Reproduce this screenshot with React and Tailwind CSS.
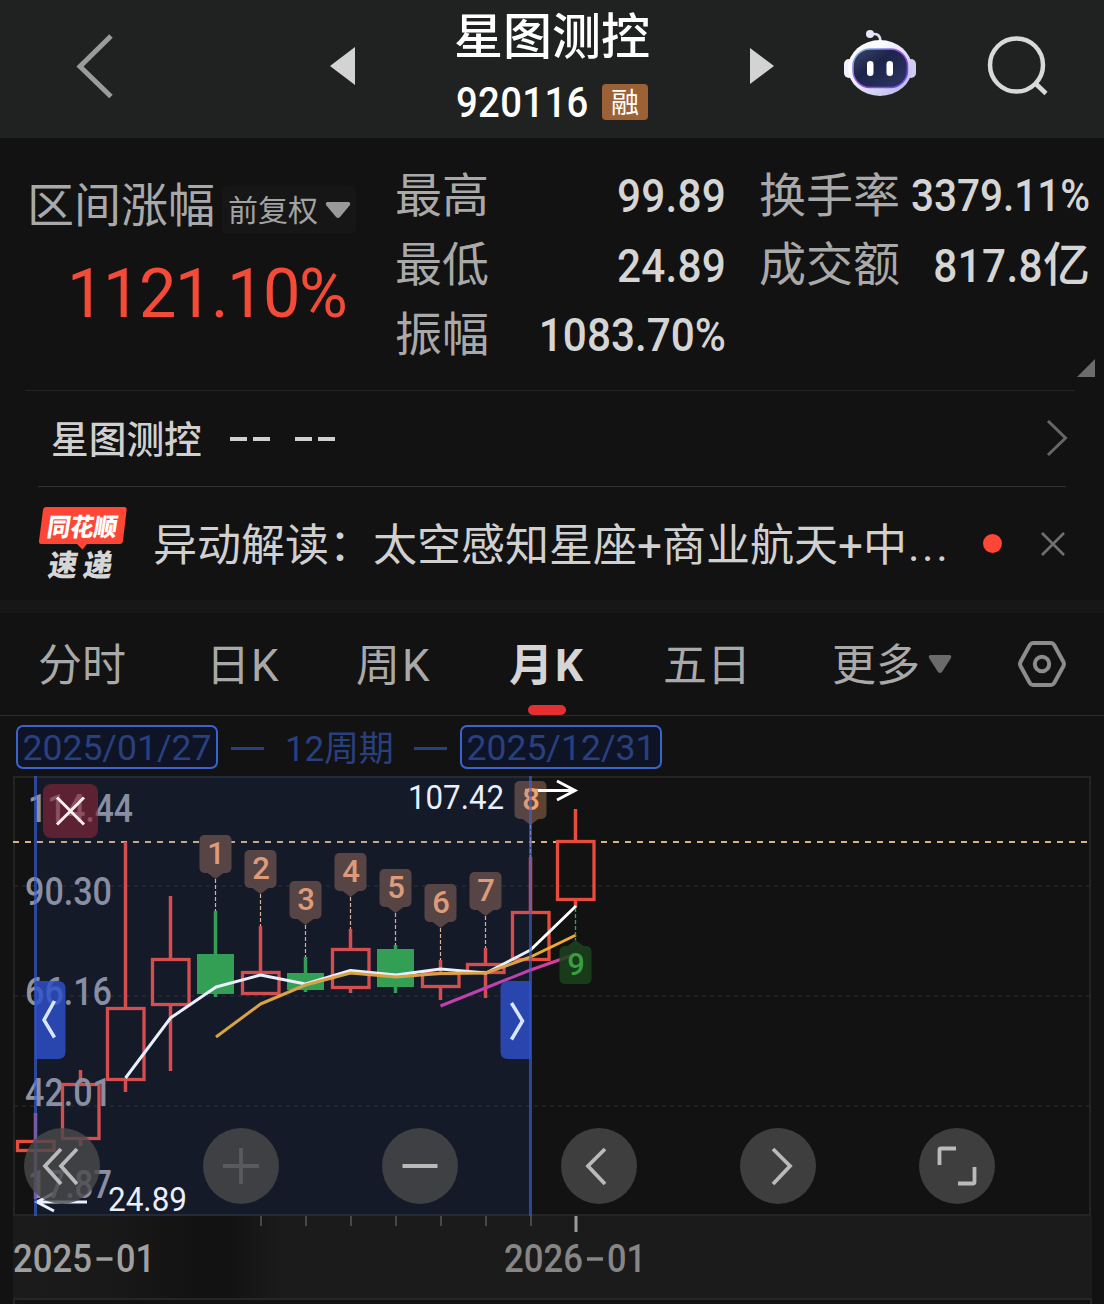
const TABS = [
  { label: '分时', box: 'ml-[38px] w-[88px]' },
  { label: '日K', box: 'ml-[80px] w-[74px] tracking-[1px]' },
  { label: '周K', box: 'ml-[76px] w-[76px] tracking-[2px]' },
  { label: '月K', box: 'ml-[77px] w-[78px] tracking-[2px]', active: true },
  { label: '五日', box: 'ml-[76px] w-[88px]' },
  { label: '更多', box: 'ml-[81px] w-[88px]' },
]

// x: centre, top/bottom: body, high/low: wick
const CANDLES = [
  { x: 35.5, top: 1140, bottom: 1152, high: 1113, low: 1199 },
  { x: 80.5, top: 1083, bottom: 1140, high: 1070, low: 1146 },
  { x: 125.5, top: 1007, bottom: 1081, high: 842, low: 1092 },
  { x: 170.5, top: 958, bottom: 1006, high: 896, low: 1071 },
  { x: 215.5, top: 954, bottom: 994, high: 911, low: 997, down: true },
  { x: 260.5, top: 971, bottom: 995, high: 926, low: 995 },
  { x: 305.5, top: 973, bottom: 990, high: 957, low: 992, down: true },
  { x: 350.5, top: 948, bottom: 989, high: 929, low: 993 },
  { x: 395.5, top: 949, bottom: 987, high: 945, low: 993, down: true },
  { x: 440.5, top: 972, bottom: 988, high: 960, low: 1000 },
  { x: 485.5, top: 963, bottom: 974, high: 948, low: 998 },
  { x: 530.5, top: 911, bottom: 961, high: 857, low: 961 },
  { x: 575.5, top: 840, bottom: 901, high: 809, low: 907 },
]

const BADGES = [
  { n: 1, x: 215.5, y: 835, to: 911 },
  { n: 2, x: 260.5, y: 850, to: 926 },
  { n: 3, x: 305.5, y: 881, to: 957 },
  { n: 4, x: 350.5, y: 853, to: 929 },
  { n: 5, x: 395.5, y: 869, to: 945 },
  { n: 6, x: 440.5, y: 884, to: 960 },
  { n: 7, x: 485.5, y: 872, to: 948 },
  { n: 8, x: 530.5, y: 781, to: 857 },
]

const PRICES = [
  { text: '114.44', x: 28, y: 822, w: 105 },
  { text: '90.30', x: 25, y: 905, w: 87 },
  { text: '66.16', x: 25, y: 1005, w: 87 },
  { text: '42.01', x: 25, y: 1106, w: 87 },
  { text: '17.87', x: 28, y: 1198, w: 84 },
]

function Header() {
  return (
    <header className="flex h-[138px] bg-[#202221]">
      <svg className="ml-[76px] mt-[33px] h-[66px] w-[38px]" viewBox="76 33 38 66" fill="none">
        <path d="M111 36 80 66.5 111 96.500" stroke="#9b9b9b" strokeWidth="5" />
      </svg>
      <svg className="ml-[216px] mt-[47px] h-[38px] w-[26px]" viewBox="0 0 26 38">
        <path d="M25 0V38L0 19Z" fill="#d3d3d3" />
      </svg>
      <div className="ml-[96px] flex w-[200px] flex-col items-center">
        <h1 className="mt-[5px] h-[66px] whitespace-nowrap text-[49px] font-medium leading-[66px] text-white">星图测控</h1>
        <div className="mt-[8px] flex w-[192px] items-center justify-between">
          <span className="w-[130px] origin-left scale-x-90 text-[42.500px] font-medium leading-[48px] tracking-[0.4px] text-white">920116</span>
          <span className="mb-[2px] flex h-[36px] w-[46px] items-center justify-center rounded-[4px] bg-[#9c6236] pt-[4px] text-[28px] leading-[36px] text-white">融</span>
        </div>
      </div>
      <svg className="ml-[98px] mt-[47px] h-[38px] w-[26px]" viewBox="0 0 26 38">
        <path d="M0 1V37L24 19Z" fill="#d3d3d3" />
      </svg>
      <Robot />
      <svg className="ml-[69px] mt-[34px] h-[64px] w-[64px]" viewBox="986 34 64 64" fill="none" stroke="#d9d9d9" strokeWidth="4.500">
        <circle cx="1016.500" cy="65" r="26.500" />
        <path d="M1035.500 83.500 1046 93.500" />
      </svg>
    </header>
  )
}

function Robot() {
  return (
    <svg className="ml-[67px] mt-[28px] h-[70px] w-[74px]" viewBox="843 28 74 70">
      <defs>
        <linearGradient id="shell" x1="0" y1="0" x2="1" y2="1">
          <stop offset="0.3" stopColor="#fbfbff" />
          <stop offset="1" stopColor="#b3acec" />
        </linearGradient>
        <linearGradient id="rim" x1="0" y1="0" x2="1" y2="1">
          <stop offset="0" stopColor="#6fd0ee" />
          <stop offset="0.5" stopColor="#a044e0" />
          <stop offset="1" stopColor="#5a55e8" />
        </linearGradient>
        <linearGradient id="visor" x1="0" y1="0" x2="1" y2="1">
          <stop offset="0" stopColor="#3e4568" />
          <stop offset="0.4" stopColor="#1c244a" />
          <stop offset="1" stopColor="#303763" />
        </linearGradient>
      </defs>
      <path d="M871 34.500C877 33 880 35 880.500 41" fill="none" stroke="#dfe0f4" strokeWidth="2.600" />
      <circle cx="870" cy="34" r="4" fill="#e6e6f8" />
      <rect x="844" y="59" width="10" height="19" rx="5" fill="#f1f0fe" />
      <rect x="906" y="59" width="10" height="19" rx="5" fill="#cfcbf5" />
      <ellipse cx="880" cy="68" rx="32" ry="28" fill="url(#shell)" />
      <rect x="853" y="49" width="54.500" height="38.500" rx="17" fill="url(#visor)" stroke="url(#rim)" strokeWidth="1.600" />
      <rect x="867" y="61" width="6.500" height="15" rx="3.200" fill="#fff" />
      <rect x="886.500" y="61" width="6.500" height="15" rx="3.200" fill="#fff" />
    </svg>
  )
}

function Stat({ label, value, unit, valueClass }) {
  return (
    <div className="flex h-[69.5px] items-center whitespace-nowrap font-medium text-[#d5d5d5]">
      <span className="text-[47px] font-normal leading-[60px] text-[#a9a9a9]">{label}</span>
      <span className="flex w-0 flex-1 justify-end pt-[1px]">
        <span className={`origin-right scale-x-90 leading-[60px] ${valueClass}`}>{value}</span>
      </span>
      {unit && <span className="text-[47px] leading-[60px]">{unit}</span>}
    </div>
  )
}

function Summary() {
  return (
    <section className="flex h-[252px] pt-[23px]">
      <div className="ml-[27px] w-[330px]">
        <div className="mt-[15px] flex items-center">
          <span className="whitespace-nowrap text-[47px] leading-[60px] text-[#a9a9a9]">区间涨幅</span>
          <span className="ml-[7px] mt-[7px] flex h-[48px] w-[134px] items-center rounded-[6px] bg-[#161616] text-[#a2a2a2]">
            <span className="pl-[6px] pt-[2px] text-[30px] leading-[40px]">前复权</span>
            <svg className="ml-[6px] h-[18px] w-[28px]" viewBox="0 0 28 18">
              <path d="M3 1H25Q27 2 26 4L16 16Q14 18 12 16L2 4Q1 2 3 1Z" fill="#999" />
            </svg>
          </span>
        </div>
        <div className="ml-[40px] mt-[18px] origin-left scale-x-[0.965] whitespace-nowrap text-[69px] leading-[80px] tracking-[-1.5px] text-[#f44a38]">
          1121.10%
        </div>
      </div>
      <div className="ml-[38px] w-[331px]">
        <Stat label="最高" value="99.89" valueClass="text-[47px] tracking-[0.2px]" />
        <Stat label="最低" value="24.89" valueClass="text-[47px] tracking-[0.2px]" />
        <Stat label="振幅" value="1083.70%" valueClass="text-[47px]" />
      </div>
      <div className="ml-[33px] w-[331px]">
        <Stat label="换手率" value="3379.11%" valueClass="text-[45px]" />
        <Stat label="成交额" value="817.8" unit="亿" valueClass="text-[47px] tracking-[0.4px]" />
        <svg className="ml-auto -mr-[5px] mt-[59px] h-[18px] w-[18px]" viewBox="0 0 18 18">
          <path d="M18 0V18H0Z" fill="#6c6c6c" />
        </svg>
      </div>
    </section>
  )
}

function NewsLogo() {
  return (
    <svg className="h-[76px] w-[92px]" viewBox="38 506 92 76">
      <path d="M46 507H124Q127 507 126.600 510L123 541Q122.500 544 119.500 544H87L82.500 549.500 77 544H42Q38.500 544 39 541L43 510Q43.500 507 46 507Z" fill="#fd4635" />
      <g className="font-black" fontSize="25">
        <text transform="translate(46 535.500) skewX(-9)" textLength="70" lengthAdjust="spacingAndGlyphs" fill="#fff">同花顺</text>
        <text transform="translate(47 575.500) skewX(-9)" fontSize="30" textLength="29" lengthAdjust="spacingAndGlyphs" fill="#d6d6d6">速</text>
        <text transform="translate(82 575.500) skewX(-9)" fontSize="30" textLength="29" lengthAdjust="spacingAndGlyphs" fill="#d6d6d6">递</text>
      </g>
    </svg>
  )
}

function News() {
  return (
    <section>
      <div className="ml-[25px] mr-[29px] h-px bg-[#232323]" />
      <div className="flex h-[95px] items-center pl-[51px] pr-[36px] text-[#d0d0d0]">
        <span className="mt-[2px] text-[37.7px] font-medium leading-[50px]">星图测控</span>
        <span className="ml-[28px] flex gap-[6px]">
          <i className="h-[4px] w-[17px] bg-[#d0d0d0]" />
          <i className="h-[4px] w-[17px] bg-[#d0d0d0]" />
        </span>
        <span className="ml-[25px] flex gap-[6px]">
          <i className="h-[4px] w-[17px] bg-[#d0d0d0]" />
          <i className="h-[4px] w-[17px] bg-[#d0d0d0]" />
        </span>
        <svg className="ml-auto h-[38px] w-[22px]" viewBox="0 1 22 38" fill="none">
          <path d="M2 2 19.500 19 2 36" stroke="#666" strokeWidth="3" />
        </svg>
      </div>
      <div className="ml-[38px] mr-[38px] h-px bg-[#313131]" />
      <div className="flex h-[113px] items-center pl-[38px]">
        <NewsLogo />
        <span className="ml-[23px] w-[801px] whitespace-nowrap pt-[4px] text-[44px] leading-[60px] text-[#d0d0d0]">
          异动解读：太空感知星座+商业航天+中<span className="pl-[1px] tracking-[2.5px]">...</span>
        </span>
        <span className="ml-[29px] size-[19px] rounded-full bg-[#fd4635]" />
        <svg className="ml-[38px] size-[26px]" viewBox="0 0 26 26" stroke="#707070" strokeWidth="2.600">
          <path d="M2 2 24 24M24 2 2 24" />
        </svg>
      </div>
      <div className="h-[13px] bg-[#171717]" />
    </section>
  )
}

function Tabs() {
  return (
    <nav className="flex h-[103px] border-b border-[#2c2c2c]">
      {TABS.map(tab => (
        <div key={tab.label} className={`relative flex-none whitespace-nowrap ${tab.box}`}>
          <span
            className={`block pt-[23px] text-[44px] leading-[60px] ${tab.active ? 'font-bold text-[#d5d5d5]' : 'text-[#a9a9a9]'}`}
          >
            {tab.label}
          </span>
          {tab.active && <span className="absolute bottom-0 left-[19px] h-[10px] w-[38px] rounded-full bg-[#e53031]" />}
        </div>
      ))}
      <svg className="ml-[8px] mt-[41px] h-[20px] w-[24px]" viewBox="0 0 24 20">
        <path d="M2 1H22Q24 2 23 4L14 18Q12 20 10 18L1 4Q0 2 2 1Z" fill="#6b6b6b" />
      </svg>
      <svg className="ml-[64px] mt-[26px] h-[50px] w-[52px]" viewBox="0 0 52 50" fill="none" stroke="#8c8c8c" strokeWidth="4">
        <path d="M17 4H35Q37 4 38.200 6L47.500 23Q48.500 25 47.500 27L38.200 44Q37 46 35 46H17Q15 46 13.800 44L4.500 27Q3.500 25 4.500 23L13.800 6Q15 4 17 4Z" />
        <circle cx="26" cy="25" r="7.200" />
      </svg>
    </nav>
  )
}

function RangeBar() {
  return (
    <div className="flex h-[60px] pl-[16px] pt-[9px] text-[35.500px] leading-[43px] text-[#29407f]">
      <span className="flex h-[44px] w-[202px] justify-center whitespace-nowrap rounded-[7px] border-2 border-[#3a63cc] bg-[#0e1426]">
        2025/01/27
      </span>
      <span className="ml-[13px] mt-[22px] h-[3px] w-[33px] bg-[#29407f]" />
      <span className="ml-[21px] w-[108px] whitespace-nowrap text-[35px] leading-[49px] tracking-[-0.2px]">12周期</span>
      <span className="ml-[21px] mt-[22px] h-[3px] w-[33px] bg-[#29407f]" />
      <span className="ml-[13px] flex h-[44px] w-[202px] justify-center whitespace-nowrap rounded-[7px] border-2 border-[#3a63cc] bg-[#0e1426]">
        2025/12/31
      </span>
    </div>
  )
}

function Candle({ x, top, bottom, high, low, down }) {
  const color = down ? '#34a642' : '#e84c3d'
  return (
    <g>
      <path d={`M${x} ${high}V${top}M${x} ${bottom}V${low}`} stroke={color} strokeWidth="3.500" />
      {down ? (
        <rect x={x - 18.5} y={top} width="37" height={bottom - top} fill={color} />
      ) : (
        <rect x={x - 18} y={top + 1.5} width="36.500" height={bottom - top - 3} fill="none" stroke={color} strokeWidth="3.300" />
      )}
    </g>
  )
}

function Badge({ n, x, y, to }) {
  return (
    <g>
      <path d={`M${x} ${y + 44}V${to}`} stroke="#e8ba92" strokeWidth="1.200" strokeDasharray="4 2" />
      <rect x={x - 16} y={y} width="32" height="38" rx="5" fill="#5c4232" />
      <path d={`M${x - 8} ${y + 38}H${x + 8}L${x} ${y + 44}Z`} fill="#5c4232" />
      <text x={x + 0.5} y={y + 29} textAnchor="middle" fontSize="31" className="font-medium" fill="#f2a26c">{n}</text>
    </g>
  )
}

function Chart() {
  return (
    <svg className="block h-[528px] w-[1104px]" viewBox="0 776 1104 528" fill="none">
      <defs>
        <linearGradient id="axis" gradientUnits="userSpaceOnUse" x1="13" x2="1092" y1="0" y2="0">
          <stop offset="0" stopColor="#1b1b1b" />
          <stop offset="0.1" stopColor="#181818" />
          <stop offset="0.17" stopColor="#121212" />
          <stop offset="0.2" stopColor="#121212" />
          <stop offset="0.25" stopColor="#1b1b1b" />
        </linearGradient>
      </defs>

      {/* frame and grid */}
      <path d="M14 777H1090V1215H14Z" stroke="#242424" strokeWidth="2" />
      <path d="M14 886H1090M14 996H1090M14 1106H1090" stroke="#262626" strokeWidth="1.500" strokeDasharray="4 4" />
      <path d="M13 842H1090" stroke="#d5b483" strokeWidth="2" strokeDasharray="6 6" />

      {CANDLES.map(c => <Candle key={c.x} {...c} />)}

      {/* moving averages */}
      <g strokeWidth="3" strokeLinejoin="round">
        <path d="M440.500 1006 485.500 988 530.500 970 576 954" stroke="#d03ea6" />
        <path d="M125.500 1078 170.500 1018 216 987 260.500 975 305.500 984 350.500 970.500 396 975 440.500 969 486 973 530.500 950 576 906" stroke="#fff" />
        <path d="M216 1037 260.500 1004 305.500 985 350.500 973 396 977 440.500 973.500 486 973 530.500 957 576 935" stroke="#ecaa32" />
      </g>

      {BADGES.map(b => <Badge key={b.n} {...b} />)}

      <path d="M575.500 908V941" stroke="#34a544" strokeWidth="1.300" strokeDasharray="4 2" />
      <path d="M567.500 946 575.500 940 583.500 946Z" fill="#1b3c1e" />
      <rect x="559.500" y="946" width="32" height="38" rx="5" fill="#1c421f" fillOpacity="0.85" />
      <text x="576" y="975" textAnchor="middle" fontSize="31" className="font-medium" fill="#34a03f">9</text>

      {/* high and low marks */}
      <g fontSize="34" fill="#fff">
        <text x="408" y="809" textLength="96" lengthAdjust="spacingAndGlyphs">107.42</text>
        <text x="108" y="1211" textLength="79" lengthAdjust="spacingAndGlyphs">24.89</text>
      </g>
      <path d="M538 790.500H574M557 781 575 790.500 557 800M87 1202H38M54 1193 37 1202 54 1211" stroke="#fff" strokeWidth="3" />
      <path d="M525 790H538" stroke="#f2a26c" strokeWidth="2.500" />

      <g fontSize="38" className="font-medium" fill="#93949a">
        {PRICES.map(p => (
          <text key={p.text} x={p.x} y={p.y} textLength={p.w} lengthAdjust="spacingAndGlyphs">{p.text}</text>
        ))}
      </g>

      {/* selected range */}
      <rect x="36" y="776" width="494" height="440" fill="#3060f4" fillOpacity="0.1" />
      <rect x="43" y="784" width="55" height="54" rx="8" fill="#8c2638" fillOpacity="0.6" />
      <path d="M57 797.500 84 824.500M84 797.500 57 824.500" stroke="#fbeeee" strokeWidth="3" />
      <path d="M35.500 776V1216M530.500 776V1216" stroke="#3a63d8" strokeOpacity="0.65" strokeWidth="3" />
      <path d="M35 981H58Q65.500 981 65.500 989V1051Q65.500 1059 58 1059H35Z" fill="#2d50cc" fillOpacity="0.82" />
      <path d="M531 981H508Q500.500 981 500.500 989V1051Q500.500 1059 508 1059H531Z" fill="#2d50cc" fillOpacity="0.82" />
      <path d="M54.500 1001 44 1020 54.500 1037.500M511.500 1003 522.500 1021 511.500 1039.500" stroke="#d8e6ff" strokeWidth="3.500" />

      {/* time axis */}
      <path d="M13 1216H1092V1298H13Z" fill="url(#axis)" />
      <path d="M14 1304V1299H1091V1304" stroke="#262626" strokeWidth="2" />
      <path d="M261 1216V1226M306 1216V1226M351 1216V1226M396 1216V1226M441 1216V1226M486 1216V1226M531 1216V1226" stroke="#484848" strokeWidth="2" />
      <path d="M576 1216V1232" stroke="#999" strokeWidth="3" />
      <g fontSize="38" className="font-medium">
        <text x="13" y="1272" textLength="79" lengthAdjust="spacingAndGlyphs" fill="#a0a0a0">2025</text>
        <text x="116" y="1272" textLength="39" lengthAdjust="spacingAndGlyphs" fill="#a0a0a0">01</text>
        <text x="504" y="1272" textLength="79" lengthAdjust="spacingAndGlyphs" fill="#868686">2026</text>
        <text x="607" y="1272" textLength="39" lengthAdjust="spacingAndGlyphs" fill="#868686">01</text>
      </g>
      <path d="M96.500 1259H112.500" stroke="#a0a0a0" strokeWidth="3.500" />
      <path d="M587 1259H603" stroke="#868686" strokeWidth="3.500" />
    </svg>
  )
}

const CONTROLS = [
  { name: 'rewind', d: 'M37 21 21 38 37 56M53 21 37 38 53 56' },
  { name: 'zoom-in', d: 'M20 38H56M38 20V56', disabled: true },
  { name: 'zoom-out', d: 'M20.500 38H55.500' },
  { name: 'prev', d: 'M44 21 27 38 44 56' },
  { name: 'next', d: 'M33 21 50 38 33 56' },
  { name: 'expand', d: 'M20.500 37V22Q20.500 20.500 22 20.500H37M55.500 39V54Q55.500 55.500 54 55.500H39' },
]

function Controls() {
  return (
    <div className="absolute left-[24px] top-[352px] flex gap-[103px]">
      {CONTROLS.map(c => (
        <button key={c.name} aria-label={c.name} className="size-[76px] rounded-full bg-[#4a4a4a]/80">
          <svg className="size-[76px]" viewBox="0 0 76 76" fill="none">
            <path d={c.d} stroke={c.disabled ? '#5a5a5d' : '#bababa'} strokeWidth="3.800" />
          </svg>
        </button>
      ))}
    </div>
  )
}

export default function App() {
  return (
    <div className="h-[1304px] w-[1104px] overflow-hidden bg-[#121212] font-[Roboto,'Noto_Sans_CJK_SC',sans-serif]">
      <Header />
      <Summary />
      <News />
      <Tabs />
      <RangeBar />
      <div className="relative">
        <Chart />
        <Controls />
      </div>
    </div>
  )
}
